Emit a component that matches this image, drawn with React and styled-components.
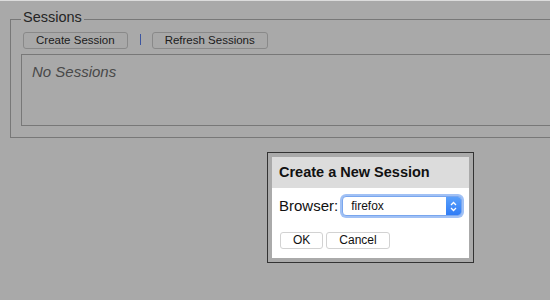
import React from "react";
import styled, { createGlobalStyle } from "styled-components";

const Global = createGlobalStyle`
  html, body { margin: 0; padding: 0; background: #dcdcdc; overflow: hidden; }
  body { font-family: "Liberation Sans", Arial, sans-serif; }
`;

const Viewport = styled.div`
  width: 100%;
  height: 300px;
  overflow: hidden;
`;

const Page = styled.div`
  position: relative;
  width: 741px;
  height: 299px;
  padding-top: 8px;
  box-sizing: border-box;
  background: #fff;
  margin-top: 1px;
`;

const Fieldset = styled.fieldset`
  margin: 0 10px;
  padding: 0 10px 11px 10px;
  border: 1px solid #b5b5b5;
  min-width: 0;
`;

const Legend = styled.legend`
  padding: 0 2px 4px 2px;
  font-size: 14.5px;
  line-height: 16px;
  color: #383838;
`;

const Toolbar = styled.div`
  display: flex;
  align-items: center;
  padding: 3px 0 0 2px;
`;

const ToolButton = styled.button`
  height: 17px;
  padding: 0 12px;
  border: 1px solid #cfcfcf;
  border-radius: 3px;
  background: #fefefe;
  font-family: "Liberation Sans", Arial, sans-serif;
  font-size: 11.5px;
  line-height: 15px;
  color: #2e2e2e;
`;

const Separator = styled.span`
  width: 1px;
  height: 11px;
  margin: 0 11px 2px 12px;
  background: #5b80f2;
`;

const ListBox = styled.div`
  margin-top: 5px;
  height: 72px;
  box-sizing: border-box;
  border: 1px solid #b5b5b5;
  padding: 8px 10px 0;
`;

const Empty = styled.div`
  font-size: 15px;
  line-height: 18px;
  font-style: italic;
  color: #6e6e6e;
`;

const Backdrop = styled.div`
  position: absolute;
  inset: 0;
  background: rgba(0, 0, 0, 0.337);
  display: flex;
  justify-content: center;
  align-items: flex-start;
  padding-top: 151px;
`;

const Dialog = styled.div`
  width: 197px;
  border: 1px solid #333;
  padding: 4px;
  background: #aaa;
`;

const DialogHeader = styled.div`
  height: 31px;
  padding-left: 7px;
  background: #dcdcdc;
  font-size: 14.5px;
  font-weight: bold;
  line-height: 31px;
  color: #111;
`;

const DialogBody = styled.div`
  background: #fff;
  padding: 8px 7px 9px 7px;
`;

const FieldRow = styled.div`
  display: flex;
  align-items: center;
  gap: 4px;
`;

const Label = styled.span`
  font-size: 15px;
  line-height: 20px;
  color: #111;
`;

const SelectWrap = styled.div`
  display: flex;
  width: 120px;
  height: 20px;
  box-sizing: border-box;
  border: 1px solid #79a6ee;
  border-radius: 4px;
  box-shadow: 0 0 0 2px rgba(110, 160, 240, 0.65);
  background: #fff;
  overflow: hidden;
`;

const Select = styled.select`
  flex: 1;
  min-width: 0;
  appearance: none;
  border: none;
  outline: none;
  background: transparent;
  padding: 0 0 0 8px;
  font-family: "Liberation Sans", Arial, sans-serif;
  font-size: 12px;
  color: #111;
`;

const Arrow = styled.div`
  width: 15px;
  display: flex;
  align-items: center;
  justify-content: center;
  background: linear-gradient(#5aa0fb, #2f7cf6);
`;

const ButtonRow = styled.div`
  display: flex;
  gap: 3px;
  margin-top: 16px;
  padding-left: 1px;
`;

const DialogButton = styled.button`
  height: 17px;
  padding: 0 12px;
  border: 1px solid #d2d2d2;
  border-radius: 3px;
  background: #fff;
  font-family: "Liberation Sans", Arial, sans-serif;
  font-size: 12px;
  line-height: 15px;
  color: #111;
`;

export default function App() {
  return (
    <>
      <Global />
      <Viewport>
        <Page>
          <Fieldset>
            <Legend>Sessions</Legend>
            <Toolbar>
              <ToolButton>Create Session</ToolButton>
              <Separator />
              <ToolButton>Refresh Sessions</ToolButton>
            </Toolbar>
            <ListBox>
              <Empty>No Sessions</Empty>
            </ListBox>
          </Fieldset>
          <Backdrop>
            <Dialog>
              <DialogHeader>Create a New Session</DialogHeader>
              <DialogBody>
                <FieldRow>
                  <Label>Browser:</Label>
                  <SelectWrap>
                    <Select defaultValue="firefox">
                      <option value="firefox">firefox</option>
                      <option value="chrome">chrome</option>
                    </Select>
                    <Arrow>
                      <svg width="7" height="11" viewBox="0 0 7 11">
                        <path d="M1 4 L3.5 1.5 L6 4 M1 7 L3.5 9.5 L6 7" fill="none" stroke="#fff" strokeWidth="1.3" />
                      </svg>
                    </Arrow>
                  </SelectWrap>
                </FieldRow>
                <ButtonRow>
                  <DialogButton>OK</DialogButton>
                  <DialogButton>Cancel</DialogButton>
                </ButtonRow>
              </DialogBody>
            </Dialog>
          </Backdrop>
        </Page>
      </Viewport>
    </>
  );
}
